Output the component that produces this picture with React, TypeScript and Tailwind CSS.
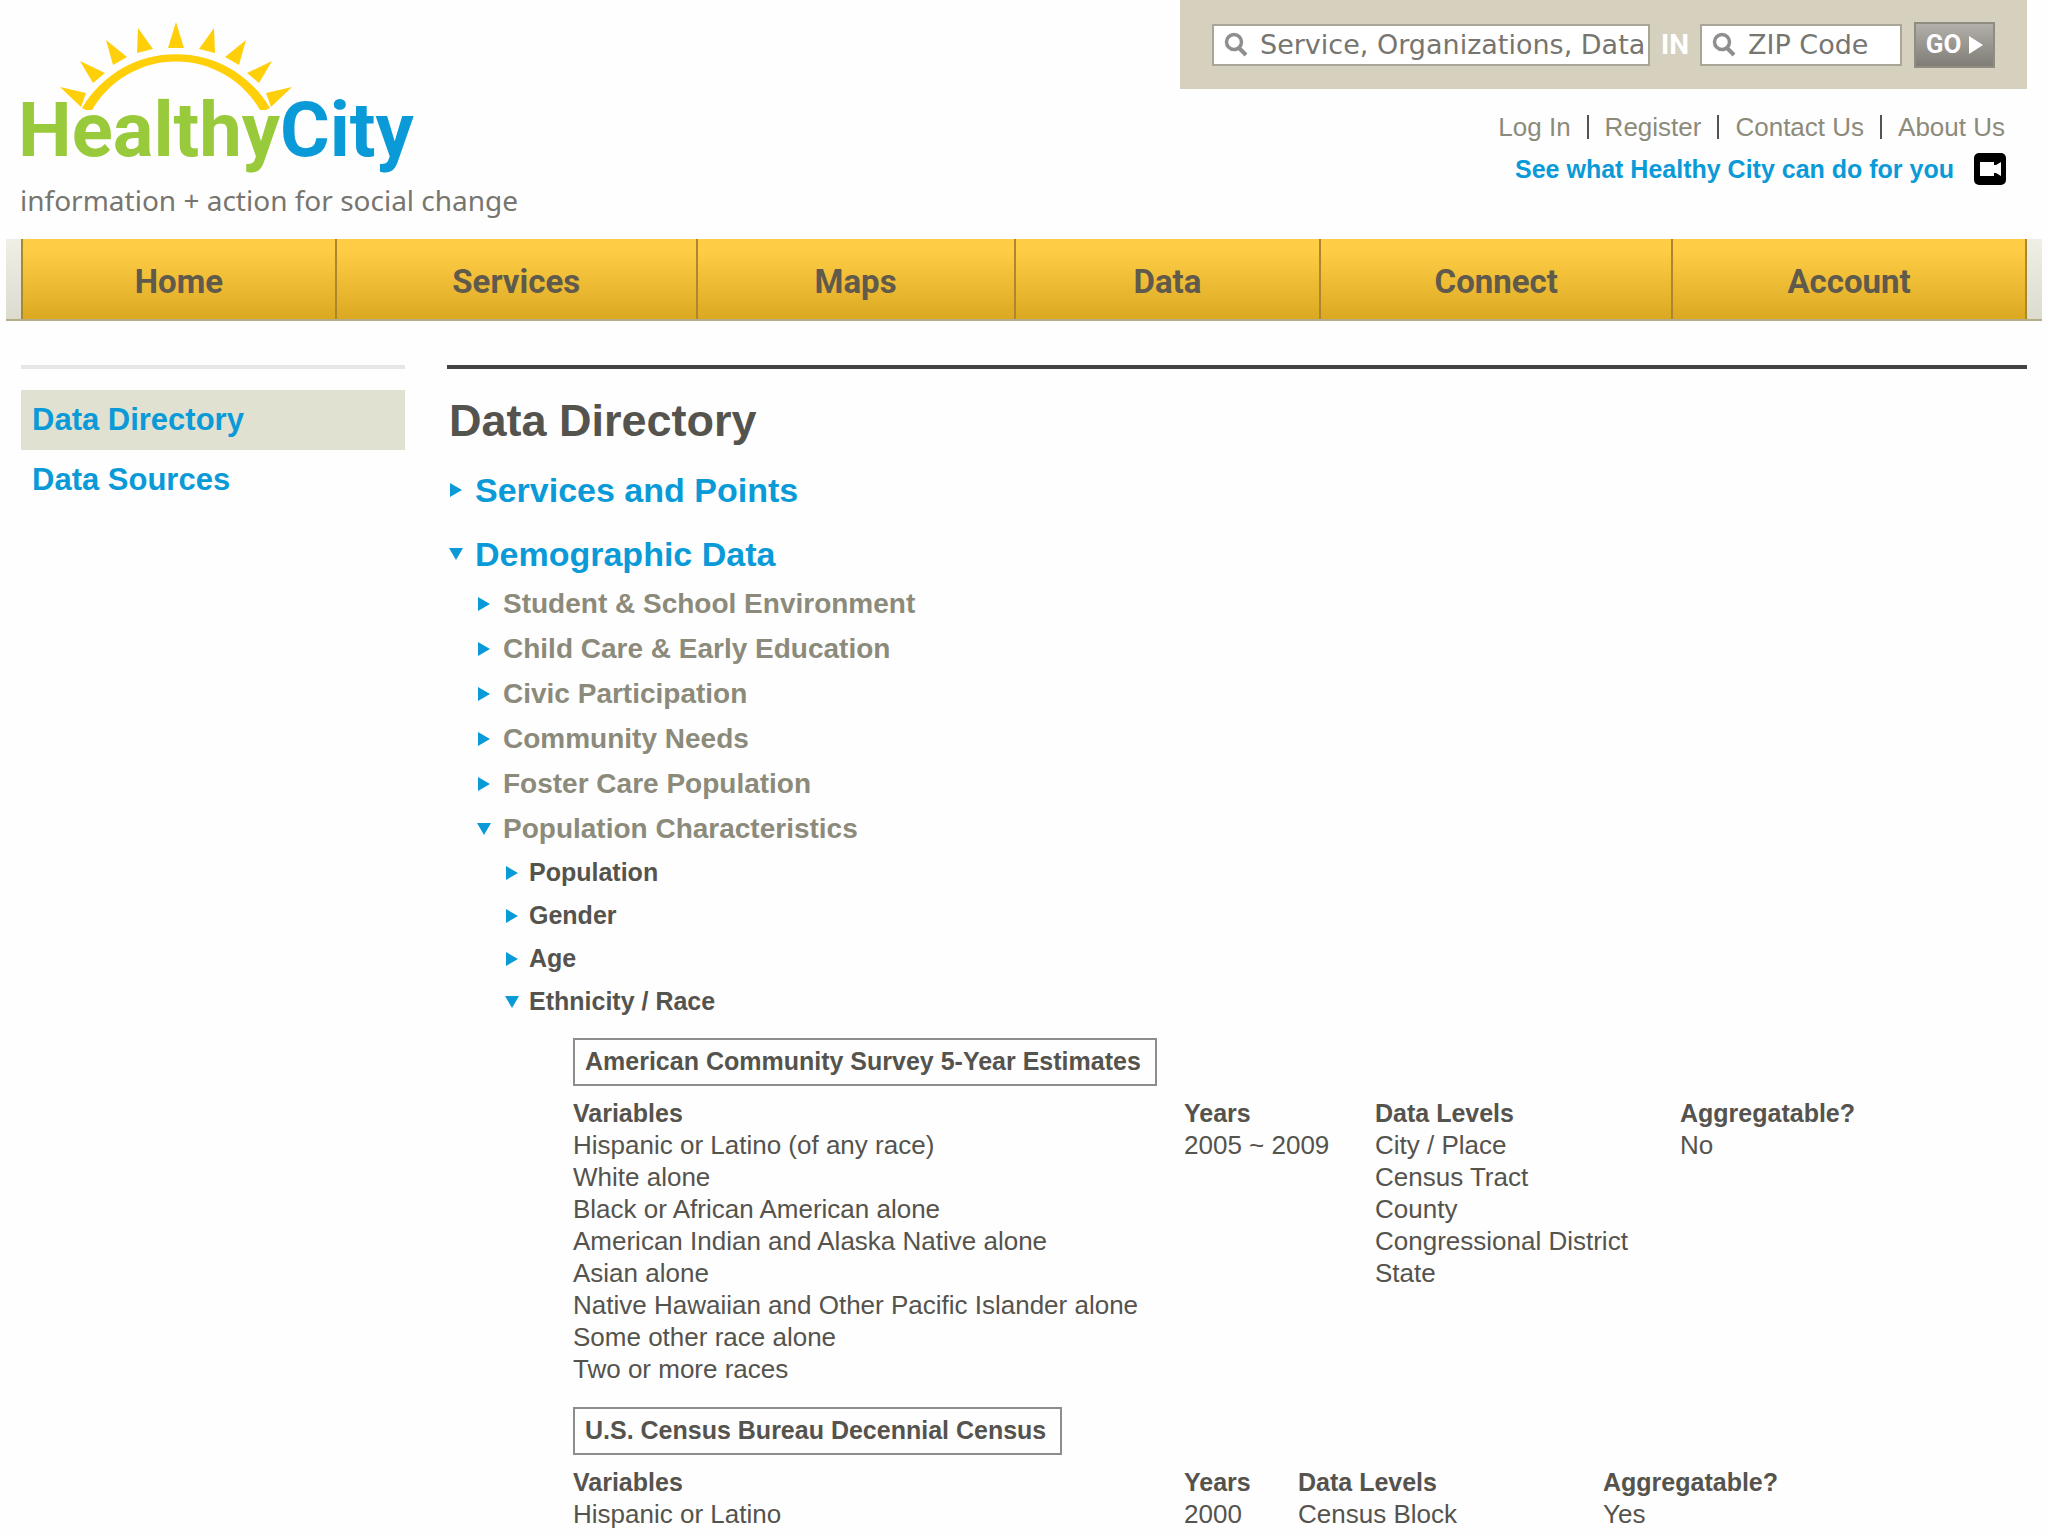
import { useState } from "react";

type Tree = "services" | "demographic";

const NAV = ["Home", "Services", "Maps", "Data", "Connect", "Account"];
const ACCOUNT_LINKS = ["Log In", "Register", "Contact Us", "About Us"];

const CATEGORIES = [
  "Student & School Environment",
  "Child Care & Early Education",
  "Civic Participation",
  "Community Needs",
  "Foster Care Population",
  "Population Characteristics",
];

const TOPICS = ["Population", "Gender", "Age", "Ethnicity / Race"];

interface Source {
  title: string;
  variables: string[];
  years: string;
  levels: string[];
  aggregatable: string;
  yearsClass: string;
}

const SOURCES: Source[] = [
  {
    title: "American Community Survey 5-Year Estimates",
    variables: [
      "Hispanic or Latino (of any race)",
      "White alone",
      "Black or African American alone",
      "American Indian and Alaska Native alone",
      "Asian alone",
      "Native Hawaiian and Other Pacific Islander alone",
      "Some other race alone",
      "Two or more races",
    ],
    years: "2005 ~ 2009",
    levels: ["City / Place", "Census Tract", "County", "Congressional District", "State"],
    aggregatable: "No",
    yearsClass: "w-[191px]",
  },
  {
    title: "U.S. Census Bureau Decennial Census",
    variables: ["Hispanic or Latino"],
    years: "2000",
    levels: ["Census Block"],
    aggregatable: "Yes",
    yearsClass: "w-[114px]",
  },
];

// Left half of the sun's rays; mirrored for the right half.
const SIDE_RAYS = "M82 8L81 33L97 29z M50 20L57 45L71 37z M24 41L37 63L49 53z M4 67L25 87L30 73z";

function Arrow({ open }: { open: boolean }) {
  return (
    <svg viewBox="0 0 14 14" className="size-3.5 shrink-0 fill-[#0a9ad8]" aria-hidden="true">
      <path d={open ? "M0 1h14L7 13z" : "M1 0v14L13 7z"} />
    </svg>
  );
}

function Lens() {
  return (
    <svg viewBox="0 0 24 26" className="h-[26px] w-6 shrink-0 fill-none stroke-[#8e8e8c]" aria-hidden="true">
      <circle cx="10" cy="10" r="7.5" strokeWidth="3.5" />
      <path d="M15 16l7 7" strokeWidth="4" />
    </svg>
  );
}

function Logo() {
  return (
    <a href="#" className="relative block pt-20 pl-[18px]">
      <svg viewBox="0 0 240 100" className="absolute top-5 left-14 h-[100px] w-60 fill-[#ffcf0a]" aria-hidden="true">
        <path d="M26 88A109 109 0 0 1 214 88L210 90H204A97 97 0 0 0 36 90H30z" />
        <path d="M120 2L112 28H128z" />
        <path d={SIDE_RAYS} />
        <path d={SIDE_RAYS} transform="translate(240 0) scale(-1 1)" />
      </svg>
      <span className="relative block font-[Roboto,sans-serif] text-[76px] leading-[100px] font-bold">
        <span className="text-[#99ca3c]">Healthy</span>
        <span className="text-[#0a9ad8]">City</span>
      </span>
      <span className="block pl-0.5 font-['Noto_Sans',sans-serif] text-[28px] leading-[40px] text-[#77756f]">
        information + action for social change
      </span>
    </a>
  );
}

function SearchBar() {
  return (
    <form
      className="flex h-[89px] items-center bg-[#d5d1be] px-8 font-['DejaVu_Sans',sans-serif]"
      onSubmit={(e) => e.preventDefault()}
    >
      <label className="flex h-[42px] w-[438px] items-center gap-3 border-2 border-[#aaa697] bg-white pl-2.5">
        <Lens />
        <input
          aria-label="Service, Organizations, Data"
          placeholder="Service, Organizations, Data"
          className="w-full min-w-0 text-[27px] leading-[38px] outline-none placeholder:text-[#77756f]"
        />
      </label>
      <span className="w-[50px] text-center font-[Roboto,sans-serif] text-[28px] font-bold text-white">IN</span>
      <label className="flex h-[42px] w-[202px] items-center gap-3 border-2 border-[#aaa697] bg-white pl-2.5">
        <Lens />
        <input
          aria-label="ZIP Code"
          placeholder="ZIP Code"
          className="w-full min-w-0 text-[27px] leading-[38px] outline-none placeholder:text-[#77756f]"
        />
      </label>
      <button
        type="submit"
        className="ml-3 flex h-[46px] w-[81px] items-center justify-center gap-2 border-2 border-[#8f8d80] bg-linear-to-b from-[#b3afaa] to-[#807d77] font-[Roboto,sans-serif] text-[26px] font-bold text-white"
      >
        GO
        <svg viewBox="0 0 14 18" className="h-[18px] w-3.5 fill-white" aria-hidden="true">
          <path d="M0 0v18L14 9z" />
        </svg>
      </button>
    </form>
  );
}

function SourceTable({ source }: { source: Source }) {
  return (
    <section>
      <h3 className="mb-[11px] flex h-12 w-fit items-center border-2 border-[#8f8c8c] pr-3.5 pl-2.5 text-[25px] font-bold">
        {source.title}
      </h3>
      <table className="w-full table-fixed text-left text-[26px] leading-8">
        <thead>
          <tr className="text-[25px]">
            <th className="w-[611px]">Variables</th>
            <th className={source.yearsClass}>Years</th>
            <th className="w-[305px]">Data Levels</th>
            <th>Aggregatable?</th>
          </tr>
        </thead>
        <tbody>
          <tr className="align-top">
            <td>
              {source.variables.map((v) => (
                <div key={v}>{v}</div>
              ))}
            </td>
            <td>{source.years}</td>
            <td>
              {source.levels.map((l) => (
                <div key={l}>{l}</div>
              ))}
            </td>
            <td>{source.aggregatable}</td>
          </tr>
        </tbody>
      </table>
    </section>
  );
}

export default function App() {
  const [open, setOpen] = useState<Tree | null>("demographic");
  const [category, setCategory] = useState("Population Characteristics");
  const [topic, setTopic] = useState("Ethnicity / Race");

  return (
    <div className="min-h-screen bg-[#fefefe] font-['Liberation_Sans',Arial,sans-serif] text-[#55534d]">
      <header className="flex h-[239px] justify-between pr-[21px]">
        <Logo />
        <div>
          <SearchBar />
          <ul className="mt-[22px] flex justify-end pr-[22px] text-[26px] leading-8 text-[#8c8b7b]">
            {ACCOUNT_LINKS.map((l, i) => (
              <li key={l} className="flex items-center">
                {i > 0 && <span className="mx-4 h-6 w-0.5 bg-[#55534d]" />}
                <a href="#">{l}</a>
              </li>
            ))}
          </ul>
          <a
            href="#"
            className="mt-2.5 flex items-center justify-end gap-5 pr-[21px] text-[25px] leading-8 font-bold text-[#0a9ad8]"
          >
            See what Healthy City can do for you
            <svg viewBox="0 0 32 32" className="size-8" aria-hidden="true">
              <rect width="32" height="32" rx="5" fill="#000" />
              <path d="M6 9h14v3h2l5-3v14l-5-3h-2v3H6z" fill="#fff" />
            </svg>
          </a>
        </div>
      </header>

      <nav className="mx-1.5 flex h-[82px] border-b-2 border-[#b5ac88] bg-linear-to-b from-[#f0efe7] to-[#dcdbce] px-[15px]">
        <ul className="grid w-full grid-cols-[314fr_361fr_318fr_306fr_352fr_354fr] border-l-2 border-[#a8892e] bg-linear-to-b from-[#ffcc45] from-15% to-[#dba920]">
          {NAV.map((n) => (
            <li key={n} className="border-r-2 border-[#a8892e]">
              <a
                href="#"
                className="flex h-full items-center justify-center pt-1.5 font-[Roboto,sans-serif] text-[33px] font-bold text-[#5f5a4b]"
              >
                {n}
              </a>
            </li>
          ))}
        </ul>
      </nav>

      <div className="mt-11 flex gap-[42px] px-[21px]">
        <aside className="w-96 shrink-0 border-t-4 border-[#e8e5e5] pt-[21px]">
          <ul className="text-[31px] leading-[60px] font-bold text-[#0a9ad8]">
            <li className="bg-[#e0e1d0] px-[11px]">
              <a href="#">Data Directory</a>
            </li>
            <li className="px-[11px]">
              <a href="#">Data Sources</a>
            </li>
          </ul>
        </aside>

        <main className="min-w-0 grow border-t-4 border-[#454346] pt-[22px] pl-0.5">
          <h1 className="text-[45px] leading-[60px] font-bold">Data Directory</h1>

          <div className="mt-3 flex flex-col items-start gap-2.5 text-[34px] leading-[54px] font-bold text-[#0a9ad8]">
            <button
              type="button"
              className="flex items-center gap-3"
              onClick={() => setOpen(open === "services" ? null : "services")}
            >
              <Arrow open={open === "services"} />
              Services and Points
            </button>
            <button
              type="button"
              className="flex items-center gap-3"
              onClick={() => setOpen(open === "demographic" ? null : "demographic")}
            >
              <Arrow open={open === "demographic"} />
              Demographic Data
            </button>
          </div>

          {open === "demographic" && (
            <ul className="pl-7 text-[28px] leading-[45px] font-bold text-[#8c8b7b]">
              {CATEGORIES.map((c) => (
                <li key={c}>
                  <button type="button" className="flex items-center gap-3" onClick={() => setCategory(c)}>
                    <Arrow open={c === category} />
                    {c}
                  </button>
                </li>
              ))}
            </ul>
          )}

          {open === "demographic" && category === "Population Characteristics" && (
            <ul className="pl-14 text-[25px] leading-[43px] font-bold">
              {TOPICS.map((t) => (
                <li key={t}>
                  <button type="button" className="flex items-center gap-2.5" onClick={() => setTopic(t)}>
                    <Arrow open={t === topic} />
                    {t}
                  </button>
                </li>
              ))}
            </ul>
          )}

          {open === "demographic" && topic === "Ethnicity / Race" && (
            <div className="mt-[15px] flex flex-col gap-[22px] pl-[124px]">
              {SOURCES.map((s) => (
                <SourceTable key={s.title} source={s} />
              ))}
            </div>
          )}
        </main>
      </div>
    </div>
  );
}
